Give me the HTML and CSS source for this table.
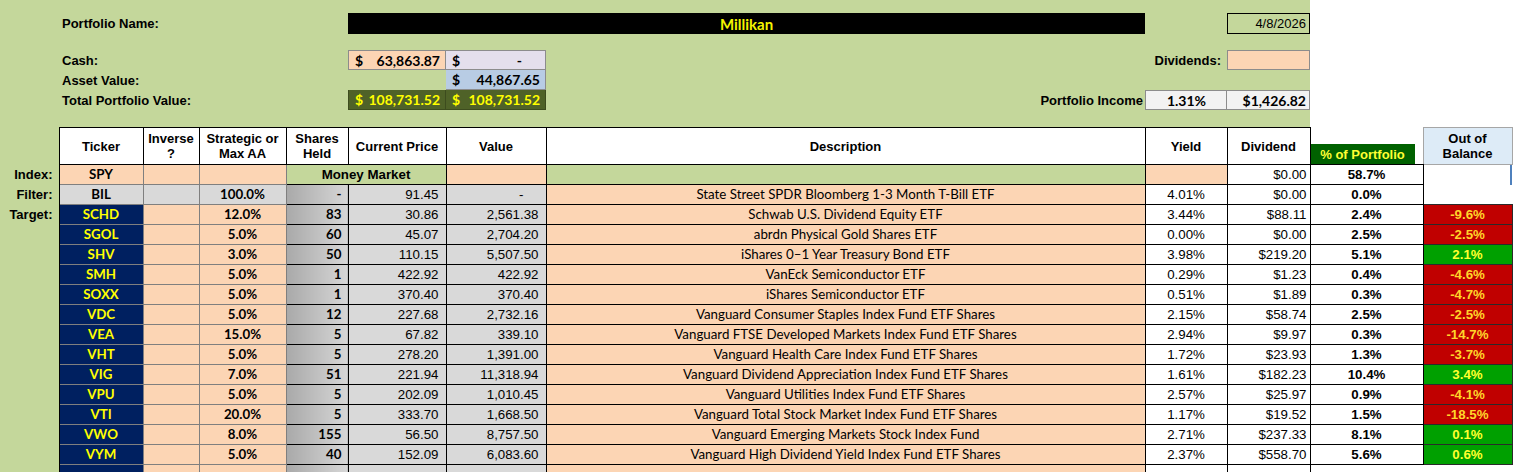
FILE: index.html
```html
<!DOCTYPE html>
<html>
<head>
<meta charset="utf-8">
<title>Portfolio - Millikan</title>
<link rel="stylesheet" href="styles.css">
</head>
<body>
<div class="sheet">
  <div class="top">
    <div class="tlabel r-name">Portfolio Name:</div>
    <div class="namebar">Millikan</div>
    <div class="datebox">4/8/2026</div>

    <div class="tlabel r-cash">Cash:</div>
    <div class="box cash1 r-cash"><span>$</span><span>63,863.87</span></div>
    <div class="box cash2 r-cash"><span>$</span><span class="dash">-</span></div>
    <div class="divlabel">Dividends:</div>
    <div class="box divbox"></div>

    <div class="tlabel r-asset">Asset Value:</div>
    <div class="box asset2 r-asset"><span>$</span><span>44,867.65</span></div>

    <div class="tlabel r-total">Total Portfolio Value:</div>
    <div class="box total1 r-total"><span>$</span><span>108,731.52</span></div>
    <div class="box total2 r-total"><span>$</span><span>108,731.52</span></div>
    <div class="inclabel">Portfolio Income</div>
    <div class="box inc1">1.31%</div>
    <div class="box inc2">$1,426.82</div>
  </div>

  <table class="grid">
    <colgroup>
      <col class="c-lbl"><col class="c-tick"><col class="c-inv"><col class="c-strat"><col class="c-sh">
      <col class="c-price"><col class="c-val"><col class="c-desc"><col class="c-yld"><col class="c-div">
      <col class="c-pct"><col class="c-oob">
    </colgroup>
    <thead>
      <tr class="hrow">
        <th class="lbl-empty"></th>
        <th>Ticker</th>
        <th>Inverse<br>?</th>
        <th>Strategic or<br>Max AA</th>
        <th>Shares<br>Held</th>
        <th>Current Price</th>
        <th>Value</th>
        <th>Description</th>
        <th>Yield</th>
        <th>Dividend</th>
        <th class="pct-h"><div class="pct-tag">% of Portfolio</div></th>
        <th class="oob-h">Out of<br>Balance</th>
      </tr>
    </thead>
    <tbody>
      <tr>
        <td class="lbl">Index:</td>
        <td class="tick peach">SPY</td>
        <td class="inv peach"></td>
        <td class="strat peach"></td>
        <td class="mm" colspan="2">Money Market</td>
        <td class="val peach"></td>
        <td class="desc green"></td>
        <td class="yld peach"></td>
        <td class="div">$0.00</td>
        <td class="pct">58.7%</td>
        <td class="oob-none oob-mark"></td>
      </tr>
      <tr>
        <td class="lbl">Filter:</td>
        <td class="tick gray">BIL</td>
        <td class="inv gray"></td>
        <td class="strat gray">100.0%</td>
        <td class="sh">-</td>
        <td class="price">91.45</td>
        <td class="val gray dashv">-</td>
        <td class="desc">State Street SPDR Bloomberg 1-3 Month T-Bill ETF</td>
        <td class="yld">4.01%</td>
        <td class="div">$0.00</td>
        <td class="pct">0.0%</td>
        <td class="oob-none"></td>
      </tr>
      <tr>
        <td class="lbl">Target:</td>
        <td class="tick navy">SCHD</td><td class="inv"></td><td class="strat">12.0%</td><td class="sh">83</td>
        <td class="price">30.86</td><td class="val">2,561.38</td>
        <td class="desc">Schwab U.S. Dividend Equity ETF</td>
        <td class="yld">3.44%</td><td class="div">$88.11</td><td class="pct">2.4%</td><td class="oob neg">-9.6%</td>
      </tr>
      <tr>
        <td class="lbl"></td>
        <td class="tick navy">SGOL</td><td class="inv"></td><td class="strat">5.0%</td><td class="sh">60</td>
        <td class="price">45.07</td><td class="val">2,704.20</td>
        <td class="desc">abrdn Physical Gold Shares ETF</td>
        <td class="yld">0.00%</td><td class="div">$0.00</td><td class="pct">2.5%</td><td class="oob neg">-2.5%</td>
      </tr>
      <tr>
        <td class="lbl"></td>
        <td class="tick navy">SHV</td><td class="inv"></td><td class="strat">3.0%</td><td class="sh">50</td>
        <td class="price">110.15</td><td class="val">5,507.50</td>
        <td class="desc">iShares 0–1 Year Treasury Bond ETF</td>
        <td class="yld">3.98%</td><td class="div">$219.20</td><td class="pct">5.1%</td><td class="oob pos">2.1%</td>
      </tr>
      <tr>
        <td class="lbl"></td>
        <td class="tick navy">SMH</td><td class="inv"></td><td class="strat">5.0%</td><td class="sh">1</td>
        <td class="price">422.92</td><td class="val">422.92</td>
        <td class="desc">VanEck Semiconductor ETF</td>
        <td class="yld">0.29%</td><td class="div">$1.23</td><td class="pct">0.4%</td><td class="oob neg">-4.6%</td>
      </tr>
      <tr>
        <td class="lbl"></td>
        <td class="tick navy">SOXX</td><td class="inv"></td><td class="strat">5.0%</td><td class="sh">1</td>
        <td class="price">370.40</td><td class="val">370.40</td>
        <td class="desc">iShares Semiconductor ETF</td>
        <td class="yld">0.51%</td><td class="div">$1.89</td><td class="pct">0.3%</td><td class="oob neg">-4.7%</td>
      </tr>
      <tr>
        <td class="lbl"></td>
        <td class="tick navy">VDC</td><td class="inv"></td><td class="strat">5.0%</td><td class="sh">12</td>
        <td class="price">227.68</td><td class="val">2,732.16</td>
        <td class="desc">Vanguard Consumer Staples Index Fund ETF Shares</td>
        <td class="yld">2.15%</td><td class="div">$58.74</td><td class="pct">2.5%</td><td class="oob neg">-2.5%</td>
      </tr>
      <tr>
        <td class="lbl"></td>
        <td class="tick navy">VEA</td><td class="inv"></td><td class="strat">15.0%</td><td class="sh">5</td>
        <td class="price">67.82</td><td class="val">339.10</td>
        <td class="desc">Vanguard FTSE Developed Markets Index Fund ETF Shares</td>
        <td class="yld">2.94%</td><td class="div">$9.97</td><td class="pct">0.3%</td><td class="oob neg">-14.7%</td>
      </tr>
      <tr>
        <td class="lbl"></td>
        <td class="tick navy">VHT</td><td class="inv"></td><td class="strat">5.0%</td><td class="sh">5</td>
        <td class="price">278.20</td><td class="val">1,391.00</td>
        <td class="desc">Vanguard Health Care Index Fund ETF Shares</td>
        <td class="yld">1.72%</td><td class="div">$23.93</td><td class="pct">1.3%</td><td class="oob neg">-3.7%</td>
      </tr>
      <tr>
        <td class="lbl"></td>
        <td class="tick navy">VIG</td><td class="inv"></td><td class="strat">7.0%</td><td class="sh">51</td>
        <td class="price">221.94</td><td class="val">11,318.94</td>
        <td class="desc">Vanguard Dividend Appreciation Index Fund ETF Shares</td>
        <td class="yld">1.61%</td><td class="div">$182.23</td><td class="pct">10.4%</td><td class="oob pos">3.4%</td>
      </tr>
      <tr>
        <td class="lbl"></td>
        <td class="tick navy">VPU</td><td class="inv"></td><td class="strat">5.0%</td><td class="sh">5</td>
        <td class="price">202.09</td><td class="val">1,010.45</td>
        <td class="desc">Vanguard Utilities Index Fund ETF Shares</td>
        <td class="yld">2.57%</td><td class="div">$25.97</td><td class="pct">0.9%</td><td class="oob neg">-4.1%</td>
      </tr>
      <tr>
        <td class="lbl"></td>
        <td class="tick navy">VTI</td><td class="inv"></td><td class="strat">20.0%</td><td class="sh">5</td>
        <td class="price">333.70</td><td class="val">1,668.50</td>
        <td class="desc">Vanguard Total Stock Market Index Fund ETF Shares</td>
        <td class="yld">1.17%</td><td class="div">$19.52</td><td class="pct">1.5%</td><td class="oob neg">-18.5%</td>
      </tr>
      <tr>
        <td class="lbl"></td>
        <td class="tick navy">VWO</td><td class="inv"></td><td class="strat">8.0%</td><td class="sh">155</td>
        <td class="price">56.50</td><td class="val">8,757.50</td>
        <td class="desc">Vanguard Emerging Markets Stock Index Fund</td>
        <td class="yld">2.71%</td><td class="div">$237.33</td><td class="pct">8.1%</td><td class="oob pos">0.1%</td>
      </tr>
      <tr>
        <td class="lbl"></td>
        <td class="tick navy">VYM</td><td class="inv"></td><td class="strat">5.0%</td><td class="sh">40</td>
        <td class="price">152.09</td><td class="val">6,083.60</td>
        <td class="desc">Vanguard High Dividend Yield Index Fund ETF Shares</td>
        <td class="yld">2.37%</td><td class="div">$558.70</td><td class="pct">5.6%</td><td class="oob pos">0.6%</td>
      </tr>
      <tr>
        <td class="lbl"></td>
        <td class="tick navy"></td><td class="inv"></td><td class="strat"></td><td class="sh"></td>
        <td class="price"></td><td class="val"></td>
        <td class="desc"></td>
        <td class="yld"></td><td class="div"></td><td class="pct-none"></td><td class="oob-none"></td>
      </tr>
    </tbody>
  </table>
</div>
</body>
</html>
```

FILE: styles.css
```css
* { box-sizing: border-box; }
html, body { margin: 0; padding: 0; background: #ffffff; }
body { font-family: "Liberation Sans", Arial, sans-serif; color: #000; }

.sheet {
  width: 1514px;
  height: 472px;
  overflow: hidden;
  background: linear-gradient(to right, #c4d79b 0, #c4d79b 1310px, #ffffff 1310px);
}

/* ---------- top summary area ---------- */
.top {
  display: grid;
  grid-template-columns: 59px 84px 56px 87px 62px 98px 100px 599px 82px 83px;
  grid-template-rows: 21px 16px 20px 20px 20px;
  padding-top: 13px;
  height: 127px;
}
.tlabel {
  grid-column: 2 / 6;
  font-weight: bold;
  font-size: 13px;
  padding-left: 3px;
  display: flex;
  align-items: center;
  white-space: nowrap;
}
.r-name { grid-row: 1; }
.r-cash { grid-row: 3; }
.r-asset { grid-row: 4; }
.r-total { grid-row: 5; }

.namebar {
  grid-column: 6 / 9;
  grid-row: 1;
  background: #000;
  color: #f4f400;
  font-family: Lato, "Open Sans", sans-serif;
  font-weight: bold;
  font-size: 15px;
  display: flex;
  align-items: center;
  justify-content: center;
}
.datebox {
  grid-column: 10;
  grid-row: 1;
  border: 1px solid #000;
  font-size: 13px;
  display: flex;
  align-items: center;
  justify-content: flex-end;
  padding-right: 3px;
}

.box {
  border: 1px solid #8c8c8c;
  font-family: Lato, "Open Sans", sans-serif;
  font-weight: bold;
  font-size: 14px;
  display: flex;
  align-items: center;
  justify-content: space-between;
  padding: 0 5px 0 6px;
}
.cash1 { grid-column: 6; background: #fcd5b4; }
.cash2 { grid-column: 7; background: #e4dfec; border-left: none; }
.cash2 .dash { padding-right: 18px; }
.asset2 { grid-column: 7; background: #b8cce4; border-top: none; border-left: none; }
.total1, .total2 { background: #4f6228; color: #ffff00; border-color: #3d4c1e; border-top: none; }
.total1 { grid-column: 6; }
.total2 { grid-column: 7; border-left: none; }

.divlabel {
  grid-column: 8 / 10;
  grid-row: 3;
  font-weight: bold;
  font-size: 13px;
  text-align: right;
  padding-right: 6px;
  display: flex;
  align-items: center;
  justify-content: flex-end;
}
.divbox { grid-column: 10; grid-row: 3; background: #fcd5b4; }

.inclabel {
  grid-column: 8;
  grid-row: 5;
  font-weight: bold;
  font-size: 13px;
  display: flex;
  align-items: center;
  justify-content: flex-end;
  padding-right: 2px;
}
.inc1, .inc2 { grid-row: 5; background: #f2f2f2; }
.inc1 { grid-column: 9; justify-content: center; }
.inc2 { grid-column: 10; justify-content: flex-end; padding-right: 3px; border-left: none; }

/* ---------- main table ---------- */
.grid {
  border-collapse: collapse;
  table-layout: fixed;
  width: 1512px;
}
.c-lbl { width: 59px; }
.c-tick { width: 84px; }
.c-inv { width: 56px; }
.c-strat { width: 87px; }
.c-sh { width: 62px; }
.c-price { width: 98px; }
.c-val { width: 100px; }
.c-desc { width: 599px; }
.c-yld { width: 82px; }
.c-div { width: 83px; }
.c-pct { width: 113px; }
.c-oob { width: 89px; }

.grid th, .grid td {
  padding: 0;
  white-space: nowrap;
  overflow: hidden;
}
.hrow { height: 37px; }
.hrow th {
  background: #fff;
  border: 1px solid #000;
  font-size: 13px;
  font-weight: bold;
  line-height: 15px;
  vertical-align: middle;
}
.hrow th.lbl-empty { background: transparent; border: none; border-right: 1px solid #000; }
.hrow th.pct-h {
  background: transparent;
  border-top: none;
  border-right: none;
  vertical-align: bottom;
  padding: 0;
}
.pct-tag {
  width: 104px;
  height: 20px;
  background: #006100;
  color: #ffff33;
  font-size: 13px;
  font-weight: bold;
  line-height: 22px;
  text-align: center;
}
.hrow th.oob-h {
  background: #ddebf7;
  border: 1px solid #a6a6a6;
}

.grid tbody tr { height: 20px; }
.grid td {
  font-size: 13.3px;
  line-height: 19px;
  border: 1px solid #000;
}
.grid td.lbl {
  border: none;
  border-right: 1px solid #000;
  text-align: right;
  font-weight: bold;
  font-size: 13px;
  padding-right: 6px;
}

.tick {
  font-family: Lato, "Open Sans", sans-serif;
  font-weight: bold;
  font-size: 14px;
  text-align: center;
  border-color: #7f7f7f !important;
  border-left-color: #000 !important;
}
.peach { background: #fcd5b4; }
.gray { background: #d9d9d9; }
.green { background: #c4d79b; }
.navy { background: #002060; color: #ffff00; }

.inv { background: #fcd5b4; border-color: #7f7f7f !important; }
.strat {
  background: #fcd5b4;
  border-color: #7f7f7f !important;
  font-family: Lato, "Open Sans", sans-serif;
  font-weight: bold;
  font-size: 14px;
  text-align: center;
}
.inv.gray, .strat.gray { background: #d9d9d9; }

.sh {
  background: linear-gradient(to right, #a9a9a9, #d6d6d6);
  font-family: Lato, "Open Sans", sans-serif;
  font-weight: bold;
  font-size: 14px;
  text-align: right;
  padding-right: 6px !important;
}
.mm {
  background: #c4d79b;
  font-weight: bold;
  font-size: 13px;
  text-align: center;
}
.price, .val {
  background: #d9d9d9;
  text-align: right;
  padding-right: 7px !important;
}
.val.peach { background: #fcd5b4; }
.val.dashv { padding-right: 22px !important; }

.desc {
  background: #fcd5b4;
  font-family: Lato, "Open Sans", sans-serif;
  font-size: 14.3px;
  text-align: center;
}
.desc.green { background: #c4d79b; }

.yld { background: #fff; text-align: center; }
.yld.peach { background: #fcd5b4; }
.div { background: #fff; text-align: right; padding-right: 3px !important; }
.pct { background: #fff; text-align: center; font-weight: bold; }
.grid td.pct-none { border: none; border-left: 1px solid #000; background: #fff; }

.grid td.oob-none { border: none; background: #fff; }
.grid td.oob-mark { box-shadow: inset -2px 0 0 #4f81bd; }
.oob {
  font-weight: bold;
  text-align: center;
  border-color: #2a2a2a !important;
}
.oob.neg { background: #c00000; color: #ffd52b; }
.oob.pos { background: #00a000; color: #ffff2e; }
```
